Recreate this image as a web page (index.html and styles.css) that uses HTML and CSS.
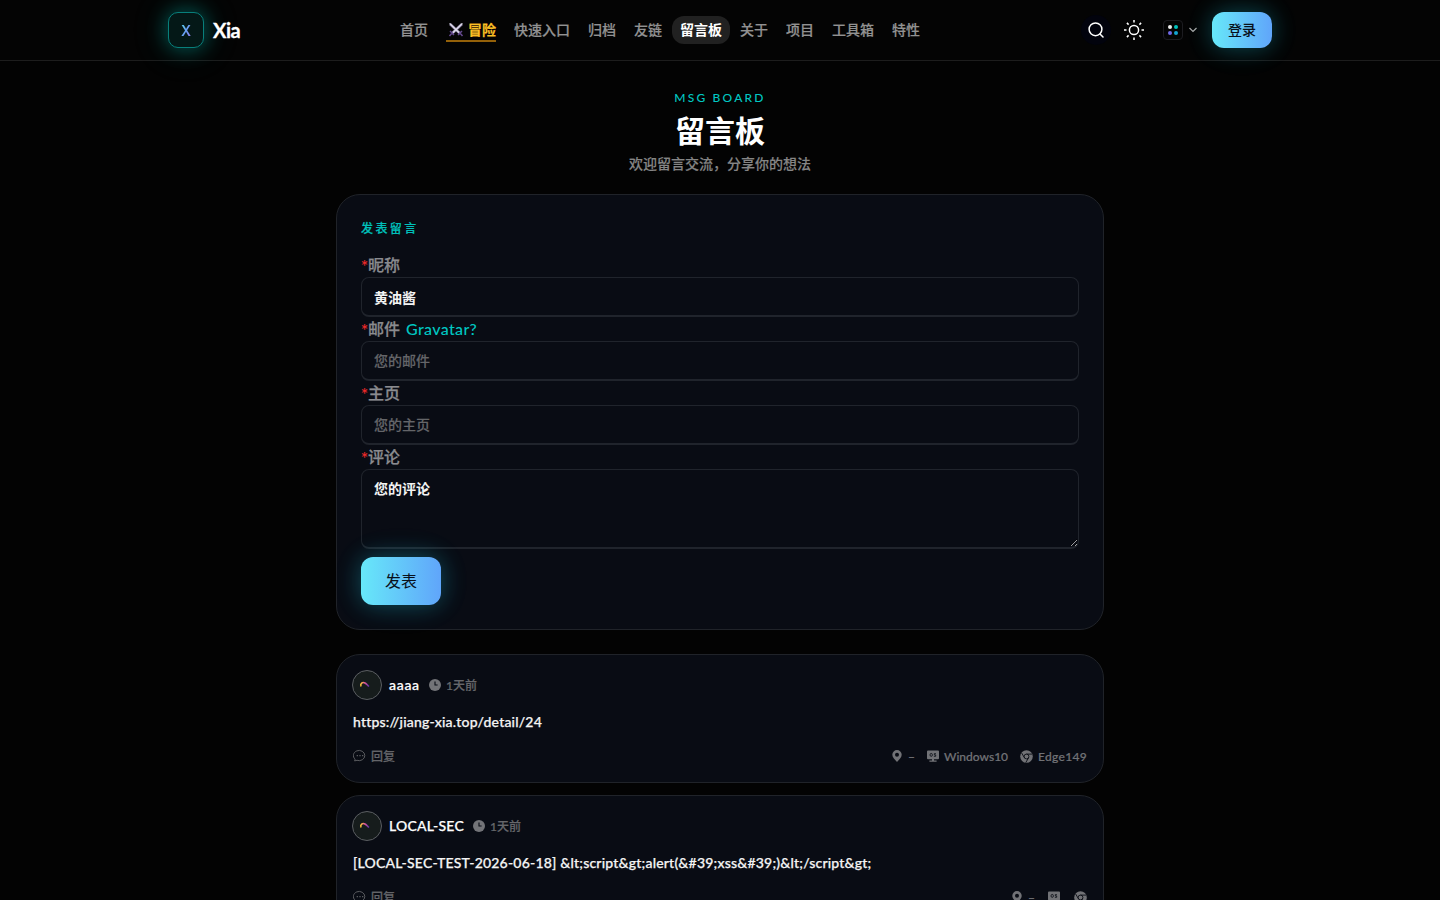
FILE: index.html
```html
<!DOCTYPE html>
<html lang="zh-CN">
<head>
    <meta charset="UTF-8">
    <meta name="viewport" content="width=device-width, initial-scale=1.0">
    <title>留言板 - Xia</title>
    <link rel="stylesheet" href="styles.css">
</head>
<body>
    <svg class="sprite">
        <symbol id="icon-clock" viewBox="0 0 12 12">
            <circle cx="6" cy="6" r="6" fill="currentColor"/>
            <path d="M6 2.6V6h2.6" fill="none" stroke="#090c14" stroke-width="1.1"/>
        </symbol>
        <symbol id="icon-reply" viewBox="0 0 14 14">
            <path d="M2.1 10.2 1.6 11.9 4 11.3A5.7 5.1 0 1 0 2.1 10.2" fill="none" stroke="currentColor" stroke-width=".9"/>
            <path d="M3.7 6.6h1.2M6.4 6.6h1.2M9.1 6.6h1.2" stroke="currentColor" stroke-width="1.2"/>
        </symbol>
        <symbol id="icon-pin" viewBox="0 0 10 12">
            <path fill="currentColor" fill-rule="evenodd" d="M5 0a4.7 4.7 0 0 1 4.7 4.7C9.7 7.5 7 9.8 5 12 3 9.8.3 7.5.3 4.7A4.7 4.7 0 0 1 5 0zm0 2.8a2 2 0 1 0 0 4 2 2 0 0 0 0-4z"/>
        </symbol>
        <symbol id="icon-os" viewBox="0 0 12 12">
            <path fill="currentColor" d="M1 .5h10a1 1 0 0 1 1 1v6.8a1 1 0 0 1-1 1H7v1.2h2.6v1.2H2.4v-1.2H5V9.3H1a1 1 0 0 1-1-1V1.5a1 1 0 0 1 1-1z"/>
            <ellipse cx="4.2" cy="4.9" rx="1.2" ry="1.5" fill="none" stroke="#090c14" stroke-width=".8"/>
            <path d="M8.9 3.6H7.3v1.3h1.4v1.4H6.9" fill="none" stroke="#090c14" stroke-width=".8"/>
        </symbol>
        <symbol id="icon-chrome" viewBox="0 0 13 13">
            <circle cx="6.5" cy="6.5" r="6.3" fill="currentColor"/>
            <circle cx="6.5" cy="6.5" r="2.4" fill="none" stroke="#090c14" stroke-width=".9"/>
            <path d="M6.5 4.1h5.6M4.4 7.7 1.6 2.9M8.6 7.7 5.8 12.6" stroke="#090c14" stroke-width=".9"/>
        </symbol>
        <linearGradient id="arc" x1="0" x2="1" y1="0" y2="0">
            <stop offset="0" stop-color="#fc3"/>
            <stop offset=".5" stop-color="#e0559a"/>
            <stop offset="1" stop-color="#5b2fa8"/>
        </linearGradient>
        <symbol id="icon-avatar" viewBox="0 0 28 28">
            <path d="M8 15.5C7 12.5 9.5 10.5 12 12c1.7 1 2.6 2.4 4 3.5" fill="none" stroke="url(#arc)" stroke-width="1.5"/>
        </symbol>
    </svg>

    <header class="header">
        <div class="header-inner">
            <a class="brand">
                <span class="logo"><span>X</span></span>
                <span class="brand-name">Xia</span>
            </a>
            <nav class="nav">
                <a>首页</a>
                <a class="adventure">
                    <span>
                        <svg width="16" height="16" viewBox="0 0 16 16" fill="none">
                            <path d="M2 2l9.5 9M14 2l-9.5 9" stroke="#8d83a6" stroke-width="2.6"/>
                            <path d="M1.6 1.4l9.6 9.3M14.4 1.4l-9.6 9.3" stroke="#e3e1ee" stroke-width="1.3"/>
                            <path d="M2 9l4 4M14 9l-4 4M4 11l-2.5 3M12 11l2.5 3" stroke="#65498f" stroke-width="1.5"/>
                        </svg>
                        冒险
                    </span>
                </a>
                <a>快速入口</a>
                <a>归档</a>
                <a>友链</a>
                <a class="active">留言板</a>
                <a>关于</a>
                <a>项目</a>
                <a>工具箱</a>
                <a>特性</a>
            </nav>
            <div class="actions">
                <button class="search">
                    <svg width="16" height="16" viewBox="0 0 16 16" fill="none" stroke="#fff" stroke-width="1.5">
                        <circle cx="7.5" cy="7.3" r="6.4"/>
                        <path d="M12 12l3 3" stroke-linecap="round"/>
                    </svg>
                </button>
                <svg class="sun" width="20" height="20" viewBox="0 0 20 20" fill="none" stroke="#fff" stroke-width="1.5">
                    <circle cx="10" cy="10" r="4.6"/>
                    <path d="M10 0v2.5M10 17.5V20M0 10h2.5M17.5 10H20M2.9 2.9l1.7 1.7M15.4 15.4l1.7 1.7M2.9 17.1l1.7-1.7M15.4 4.6l1.7-1.7"/>
                </svg>
                <div class="theme">
                    <span class="dots"><i></i><i></i><i></i><i></i></span>
                    <svg width="8" height="6" viewBox="0 0 8 6" fill="none" stroke="#aaa" stroke-width="1.2"><path d="M.5 1 4 4.5 7.5 1"/></svg>
                </div>
                <button class="btn login">登录</button>
            </div>
        </div>
    </header>

    <main class="container">
        <div class="page-title">
            <p class="eyebrow">MSG BOARD</p>
            <h1>留言板</h1>
            <p class="subtitle">欢迎留言交流，分享你的想法</p>
        </div>

        <form class="card form-card">
            <h2>发表留言</h2>
            <label for="nickname"><b>*</b>昵称</label>
            <input type="text" id="nickname" value="黄油酱">
            <label for="email"><b>*</b>邮件 <a>Gravatar?</a></label>
            <input type="text" id="email" placeholder="您的邮件">
            <label for="site"><b>*</b>主页</label>
            <input type="text" id="site" placeholder="您的主页">
            <label for="content"><b>*</b>评论</label>
            <textarea id="content" placeholder="您的评论"></textarea>
            <button type="button" class="btn submit">发表</button>
        </form>

        <div class="comments">
            <article class="card comment">
                <div class="comment-head">
                    <span class="avatar"><svg width="28" height="28"><use href="#icon-avatar"/></svg></span>
                    <span class="author author-short">aaaa</span>
                    <svg width="12" height="12"><use href="#icon-clock"/></svg>
                    <span class="time">1天前</span>
                </div>
                <p class="text">https://jiang-xia.top/detail/24</p>
                <div class="comment-foot">
                    <span class="reply"><svg width="14" height="14"><use href="#icon-reply"/></svg>回复</span>
                    <span class="pin"><svg width="10" height="12"><use href="#icon-pin"/></svg>–</span>
                    <span class="os"><svg width="12" height="12"><use href="#icon-os"/></svg>Windows10</span>
                    <span class="browser"><svg width="13" height="13"><use href="#icon-chrome"/></svg>Edge149</span>
                </div>
            </article>

            <article class="card comment">
                <div class="comment-head">
                    <span class="avatar"><svg width="28" height="28"><use href="#icon-avatar"/></svg></span>
                    <span class="author author-long">LOCAL-SEC</span>
                    <svg width="12" height="12"><use href="#icon-clock"/></svg>
                    <span class="time">1天前</span>
                </div>
                <p class="text">[LOCAL-SEC-TEST-2026-06-18] &amp;lt;script&amp;gt;alert(&amp;#39;xss&amp;#39;)&amp;lt;/script&amp;gt;</p>
                <div class="comment-foot unknown">
                    <span class="reply"><svg width="14" height="14"><use href="#icon-reply"/></svg>回复</span>
                    <span class="pin"><svg width="10" height="12"><use href="#icon-pin"/></svg>–</span>
                    <span class="os"><svg width="12" height="12"><use href="#icon-os"/></svg></span>
                    <span class="browser"><svg width="13" height="13"><use href="#icon-chrome"/></svg></span>
                </div>
            </article>
        </div>
    </main>
</body>
</html>
```
FILE: styles.css
```css
* {
    box-sizing: border-box;
}
body {
    margin: 0;
    height: 900px;
    overflow: hidden;
    background: #030303;
    color: #f5f5f5;
    font-family: Lato, "Noto Sans CJK SC", sans-serif;
    font-size: 14px;
    font-weight: 500;
}
h1, h2, p {
    margin: 0;
}
svg {
    display: block;
    flex-shrink: 0;
}
.sprite {
    position: absolute;
    width: 0;
    height: 0;
}
button, input, textarea {
    font-family: inherit;
}

/* header */
.header {
    height: 61px;
    border-bottom: 1px solid #1d1d1d;
    background: #040404;
}
.header-inner {
    display: flex;
    align-items: center;
    width: 1104px;
    height: 60px;
    margin: 0 auto;
}
.brand {
    display: flex;
    align-items: center;
    gap: 9px;
    width: 224px;
}
.logo {
    display: flex;
    align-items: center;
    justify-content: center;
    width: 36px;
    height: 36px;
    border: 1px solid #087f7b;
    border-radius: 10px;
    background: #041817;
    box-shadow: 0 0 22px rgba(0, 210, 200, .45), 0 0 48px rgba(0, 210, 200, .1);
}
.logo span {
    font-family: Inter, sans-serif;
    font-size: 14px;
    font-weight: 600;
    background: linear-gradient(120deg, #55ddea, #6c9af5 55%, #9a78e8);
    -webkit-background-clip: text;
    color: transparent;
}
.brand-name {
    font-size: 20px;
    font-weight: 700;
    letter-spacing: -.5px;
    color: #fff;
    -webkit-text-stroke: .3px;
}
.nav {
    display: flex;
    gap: 2px;
}
.nav a {
    height: 28px;
    padding: 0 8px;
    border-radius: 12px;
    line-height: 27px;
    color: #929292;
    white-space: nowrap;
    -webkit-text-stroke: .2px;
}
.nav .active {
    background: #212121;
    color: #fff;
    font-weight: 700;
    -webkit-text-stroke: 0;
}
.adventure span {
    display: flex;
    align-items: center;
    gap: 4px;
    width: 50px;
    height: 26px;
    padding: 3px 0 0 2px;
    border-bottom: 2px solid #946109;
    color: #fbbf24;
    font-weight: 700;
}
.actions {
    display: flex;
    align-items: center;
    margin-left: auto;
}
.search {
    display: flex;
    align-items: center;
    justify-content: center;
    width: 30px;
    height: 30px;
    padding: 0;
    border: 0;
    border-radius: 50%;
    background: #02030d;
}
.sun {
    margin-left: 13px;
}
.theme {
    display: flex;
    align-items: center;
    gap: 6px;
    margin: 0 15px 0 19px;
}
.dots {
    display: grid;
    grid-template-columns: 4px 4px;
    gap: 2px;
    place-content: center;
    width: 20px;
    height: 20px;
    border: 1px solid #1c1c20;
    border-radius: 4px;
}
.dots i {
    width: 4px;
    height: 4px;
    border-radius: 50%;
    background: #eee;
}
.dots i:nth-child(2) {
    background: #00c3bd;
}
.dots i:nth-child(3) {
    background: #7069e6;
}
.dots i:nth-child(4) {
    background: #13a5d0;
}
.btn {
    padding: 0 0 2px;
    border: 0;
    border-radius: 12px;
    background: linear-gradient(90deg, #67e8f9, #60a5fa);
    box-shadow: 0 0 24px rgba(34, 211, 238, .3), 0 0 40px rgba(34, 211, 238, .06);
    color: #08101c;
}
.login {
    width: 60px;
    height: 36px;
    font-size: 14px;
    font-weight: 500;
}

/* page title */
.container {
    width: 768px;
    margin: 0 auto;
}
.page-title {
    height: 133px;
    padding-top: 29px;
    text-align: center;
}
.eyebrow {
    font-size: 12px;
    line-height: 16px;
    letter-spacing: 2.2px;
    color: #00c7c2;
}
h1 {
    font-size: 30px;
    line-height: 36px;
    margin-top: 6px;
    color: #fff;
}
.subtitle {
    line-height: 20px;
    margin-top: 6px;
    color: #858585;
    -webkit-text-stroke: .15px;
}

/* form */
.card {
    border: 1px solid #202329;
    border-radius: 24px;
    background: #090c14;
}
.form-card {
    height: 436px;
    padding: 24px;
}
h2 {
    height: 18px;
    margin-bottom: 16px;
    font-size: 12px;
    line-height: 20px;
    letter-spacing: 2.4px;
    font-weight: 500;
    color: #00c0bb;
    -webkit-text-stroke: .2px;
}
label {
    display: block;
    height: 24px;
    font-size: 16px;
    line-height: 24px;
    color: #8a8b8f;
    -webkit-text-stroke: .25px;
}
label b {
    display: inline-block;
    width: 7px;
    font-family: Inter, sans-serif;
    font-size: 14px;
    font-weight: 400;
    line-height: 20px;
    color: #ef2929;
    -webkit-text-stroke: 0;
}
label a {
    margin-left: 2px;
    letter-spacing: .35px;
    color: #00c7c2;
    -webkit-text-stroke: 0;
}
input, textarea {
    display: block;
    width: 100%;
    height: 40px;
    padding: 0 12px;
    border: 1px solid #20242c;
    border-bottom-width: 2px;
    border-radius: 8px;
    outline: 0;
    background: #090c14;
    color: #f3f3f3;
    font-size: 14px;
    font-weight: 700;
}
input::placeholder {
    color: #646569;
    font-weight: 500;
    -webkit-text-stroke: .15px;
}
textarea {
    height: 80px;
    padding-top: 9px;
    line-height: 20px;
}
textarea::placeholder {
    color: #f3f3f3;
}
.submit {
    display: block;
    width: 80px;
    height: 48px;
    margin-top: 8px;
    font-size: 16px;
}

/* comments */
.comments {
    display: flex;
    flex-direction: column;
    gap: 12px;
    margin-top: 24px;
}
.comment {
    height: 129px;
    padding: 15px 16px 0 15px;
}
.comment-head {
    display: flex;
    align-items: center;
    height: 30px;
    color: #737478;
}
.avatar {
    width: 30px;
    height: 30px;
    border: 1px solid #5b5e62;
    border-radius: 50%;
    background: #161c1c;
}
.author {
    margin: 0 9px 0 7px;
    padding-bottom: 2px;
    color: #fff;
    white-space: nowrap;
    letter-spacing: .2px;
    -webkit-text-stroke: .25px;
}
.author-short {
    width: 31px;
    letter-spacing: .7px;
}
.author-long {
    width: 75px;
}
.time {
    margin-left: 5px;
    padding-bottom: 1px;
    font-size: 12px;
    color: #66676b;
    -webkit-text-stroke: .2px;
}
.text {
    margin: 12px 0 0 1px;
    line-height: 20px;
    letter-spacing: .2px;
    white-space: nowrap;
    -webkit-text-stroke: .25px;
}
.comment-foot {
    display: flex;
    align-items: center;
    height: 18px;
    margin: 15px 0 0 1px;
    font-size: 12px;
    line-height: 19px;
    color: #717276;
    -webkit-text-stroke: .2px;
}
.comment-foot span {
    display: flex;
    align-items: center;
    gap: 5px;
}
.comment-foot .reply {
    gap: 4px;
    margin-right: auto;
    color: #636468;
}
.comment-foot .pin {
    gap: 6px;
}
.os, .browser {
    margin-left: 12px;
}
.browser {
    letter-spacing: .3px;
}
.unknown .os {
    margin-left: 13px;
}
.unknown .browser {
    margin-left: 14px;
}
```
